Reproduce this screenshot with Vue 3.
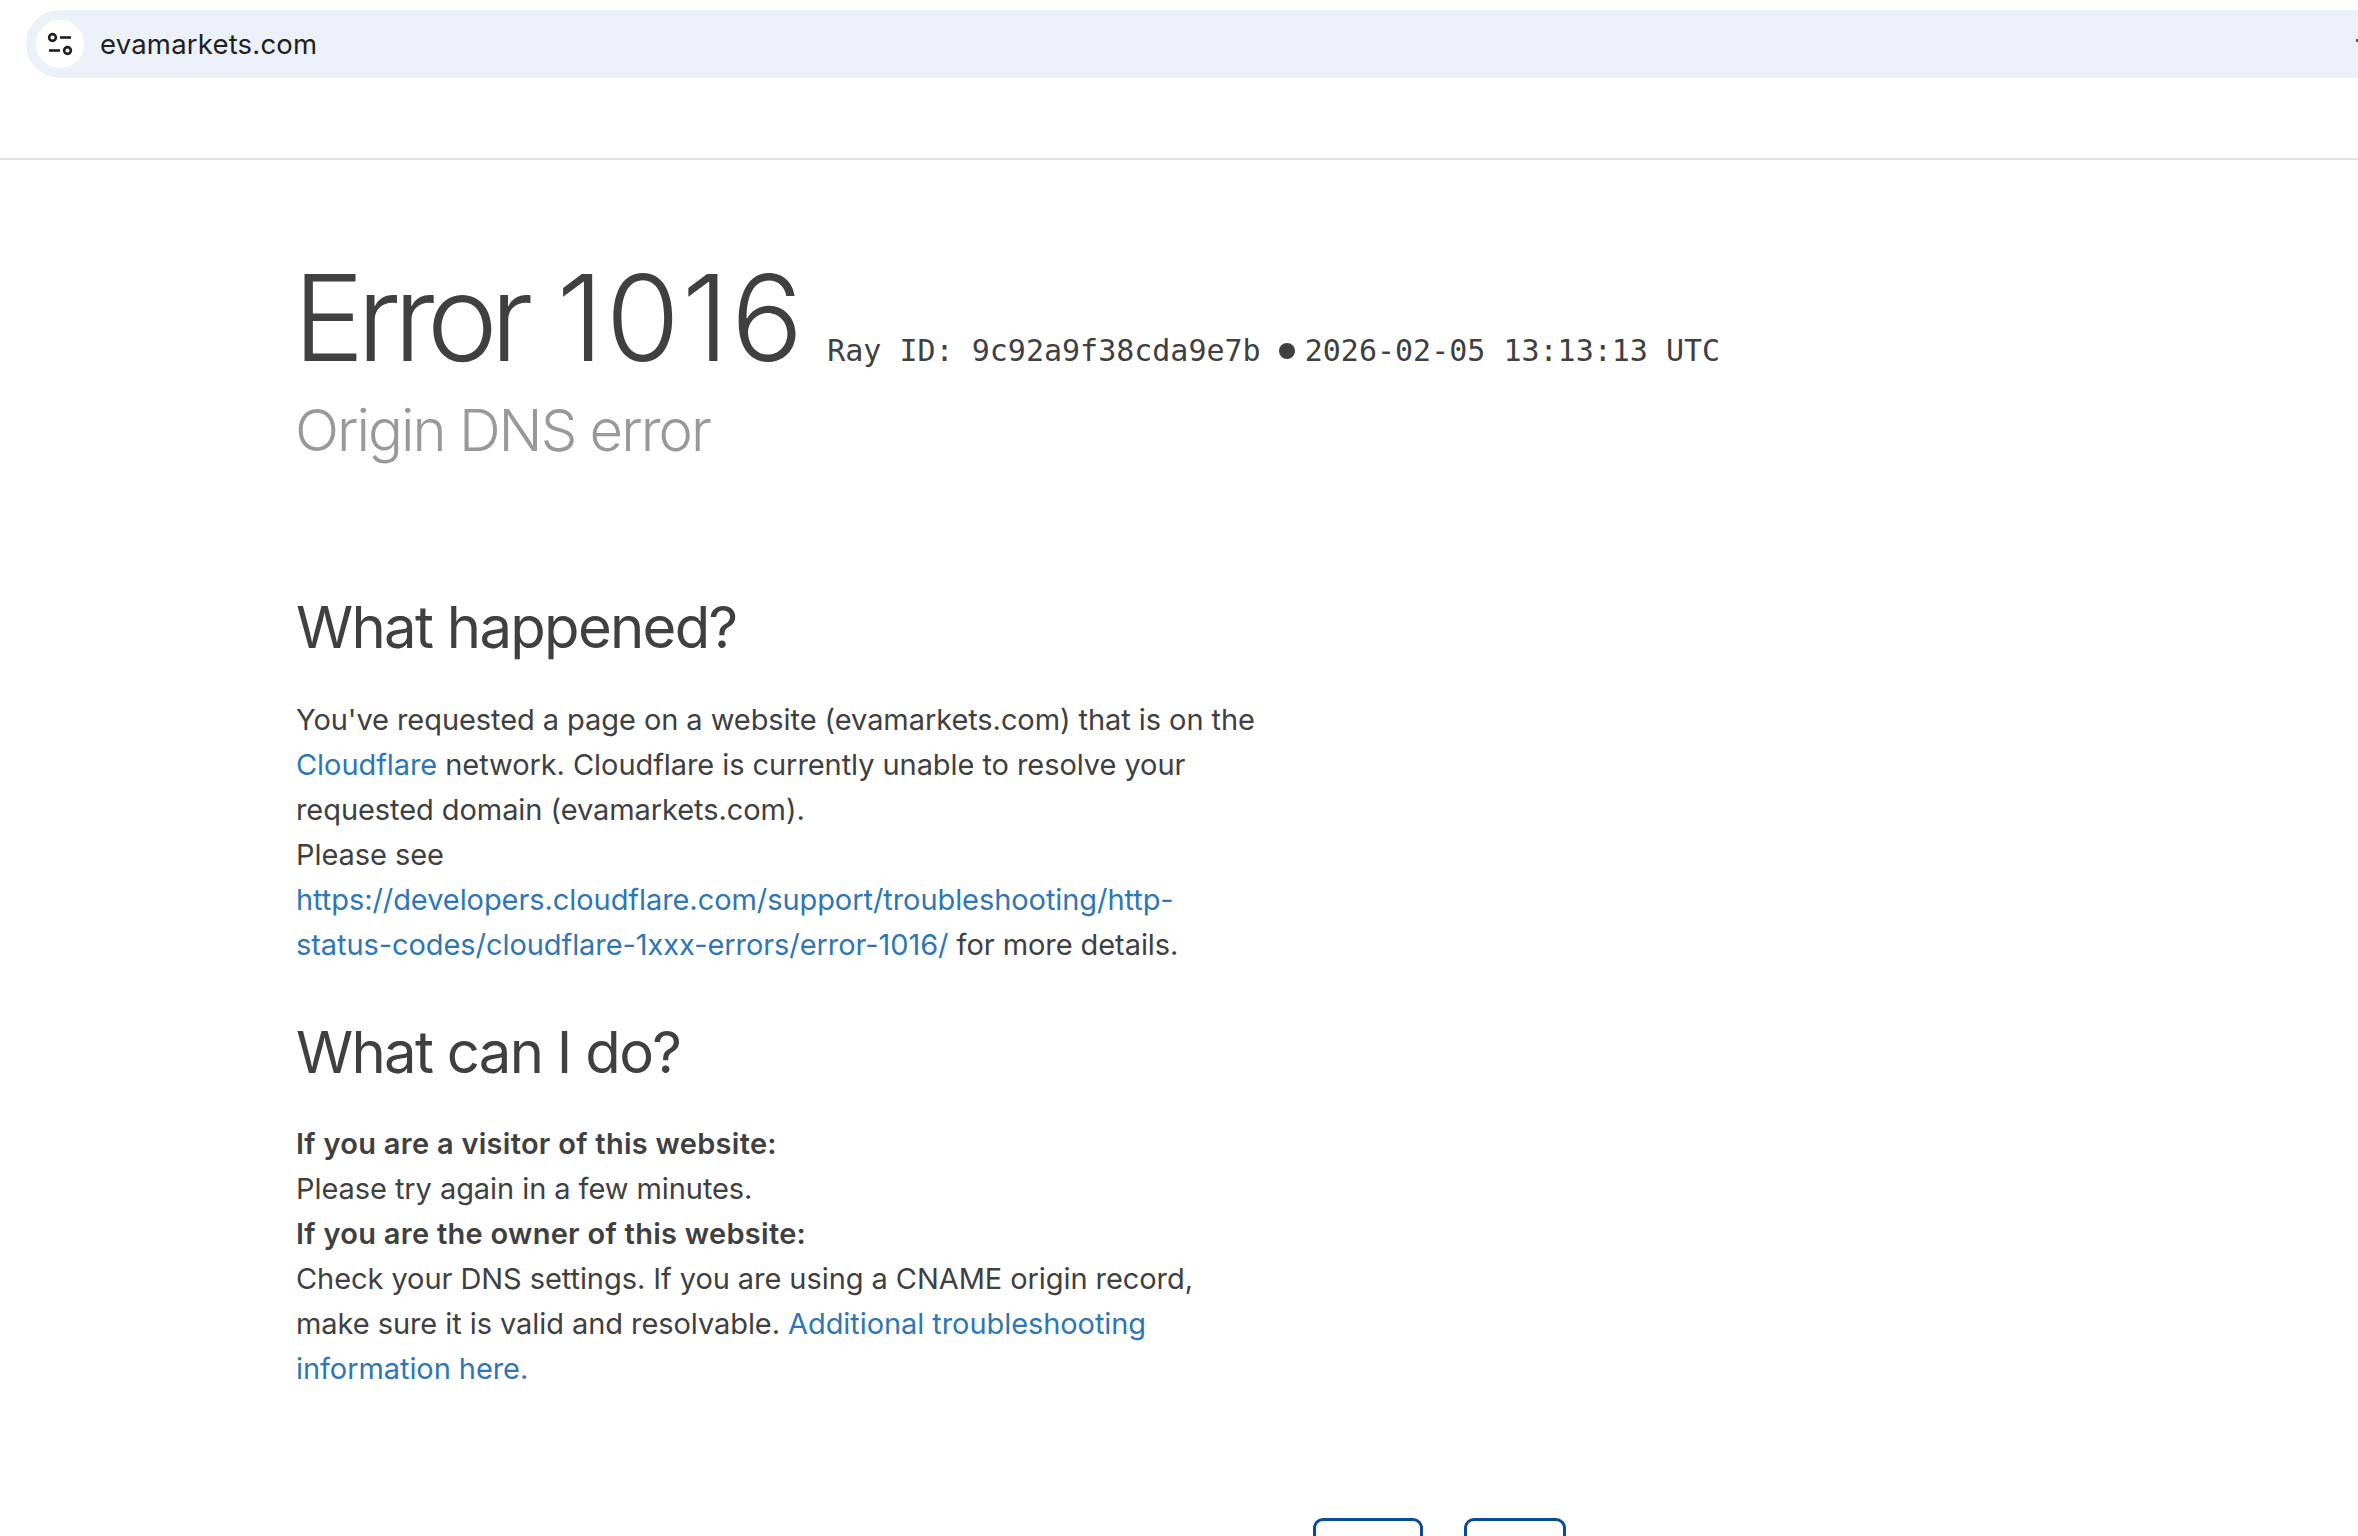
<script setup>
const title = ['Error', '1016']
</script>

<template>
  <div class="page">
    <header class="chrome">
      <div class="omnibox">
        <span class="site-icon">
          <svg width="26" height="26" viewBox="0 0 26 26" fill="none" stroke="#1f1f1f" stroke-width="2.6">
            <circle cx="5.5" cy="6.5" r="3.4" />
            <path d="M13 6.5h11" />
            <circle cx="20.5" cy="19.5" r="3.4" />
            <path d="M2 19.5h11" />
          </svg>
        </span>
        <span class="url">evamarkets.com</span>
        <span class="edge"></span>
      </div>
    </header>
    <main class="content">
      <div class="headline">
        <h1><span class="word">{{ title[0] }}</span> <span class="code">{{ title[1] }}</span></h1>
        <span class="meta">Ray ID: 9c92a9f38cda9e7b <span class="dot"></span>2026-02-05 13:13:13 UTC</span>
      </div>
      <h2 class="sub">Origin DNS error</h2>
      <section class="what">
        <h3>What happened?</h3>
        <p>You've requested a page on a website (evamarkets.com) that is on the <a>Cloudflare</a> network. Cloudflare is currently unable to resolve your requested domain (evamarkets.com).<br />Please see <a>https://developers.cloudflare.com/support/troubleshooting/http-status-codes/cloudflare-1xxx-errors/error-1016/</a> for more details.</p>
      </section>
      <section class="can">
        <h3>What can I do?</h3>
        <p><strong>If you are a visitor of this website:</strong><br />Please try again in a few minutes.<br /><strong>If you are the owner of this website:</strong><br />Check your DNS settings. If you are using a CNAME origin record, make sure it is valid and resolvable. <a>Additional troubleshooting information here.</a></p>
      </section>
      <div class="buttons">
        <span class="btn first"></span>
        <span class="btn second"></span>
      </div>
    </main>
  </div>
</template>

<style scoped>
.page {
  width: 2358px;
  height: 1536px;
  overflow: hidden;
  background: #fff;
  font-family: Inter, "Liberation Sans", sans-serif;
  color: #404040;
}
.chrome {
  height: 148px;
  padding: 10px 0 0 26px;
  border-bottom: 2px solid #e0e0e0;
  box-sizing: content-box;
}
.omnibox {
  position: relative;
  height: 68px;
  display: flex;
  align-items: center;
  padding-left: 10px;
  background: #ecf0f9;
  border-radius: 34px 0 0 34px;
}
.edge {
  position: absolute;
  right: 0;
  top: 29px;
  width: 2px;
  height: 3px;
  background: #555;
}
.site-icon {
  width: 48px;
  height: 48px;
  border-radius: 50%;
  background: #fff;
  display: flex;
  align-items: center;
  justify-content: center;
}
.url {
  margin-left: 16px;
  font-size: 27.5px;
  letter-spacing: 0.2px;
  color: #1f1f1f;
}
.content {
  padding: 92px 0 0 296px;
}
.headline {
  display: flex;
  align-items: baseline;
  height: 132px;
}
h1 {
  margin: 0 0 0 -3px;
  font-size: 120px;
  font-weight: 300;
  line-height: 132px;
}
.word {
  letter-spacing: -7.7px;
}
.code {
  margin-left: -3px;
  letter-spacing: 2px;
}
.meta {
  margin-left: 22px;
  font-family: "DejaVu Sans Mono", monospace;
  font-size: 30px;
}
.dot {
  display: inline-block;
  width: 16px;
  height: 16px;
  border-radius: 50%;
  background: #404040;
  vertical-align: 2px;
  margin: 0 10px 0 0;
}
.sub {
  margin: 10px 0 0 -1px;
  font-size: 58px;
  font-weight: 300;
  line-height: 72px;
  letter-spacing: -2px;
  color: #999;
}
.what {
  margin-top: 125px;
}
.can {
  margin-top: 49px;
}
h3 {
  margin: 0;
  font-size: 58px;
  font-weight: 400;
  line-height: 72px;
  letter-spacing: -1.7px;
}
p {
  margin: 34px 0 0;
  width: 965px;
  font-size: 29px;
  line-height: 45px;
  letter-spacing: -0.07px;
}
.can p {
  margin-top: 33px;
}
a {
  color: #2e76b5;
}
strong {
  font-weight: 600;
  letter-spacing: 0.28px;
}
.buttons {
  display: flex;
  gap: 41px;
  margin: 127px 0 0 1017px;
}
.btn {
  display: block;
  height: 60px;
  border: 3px solid #0b4a9b;
  border-radius: 10px;
  box-sizing: border-box;
}
.first { width: 110px; }
.second { width: 102px; }
</style>

<style>
html, body { margin: 0; background: #fff; }
</style>
